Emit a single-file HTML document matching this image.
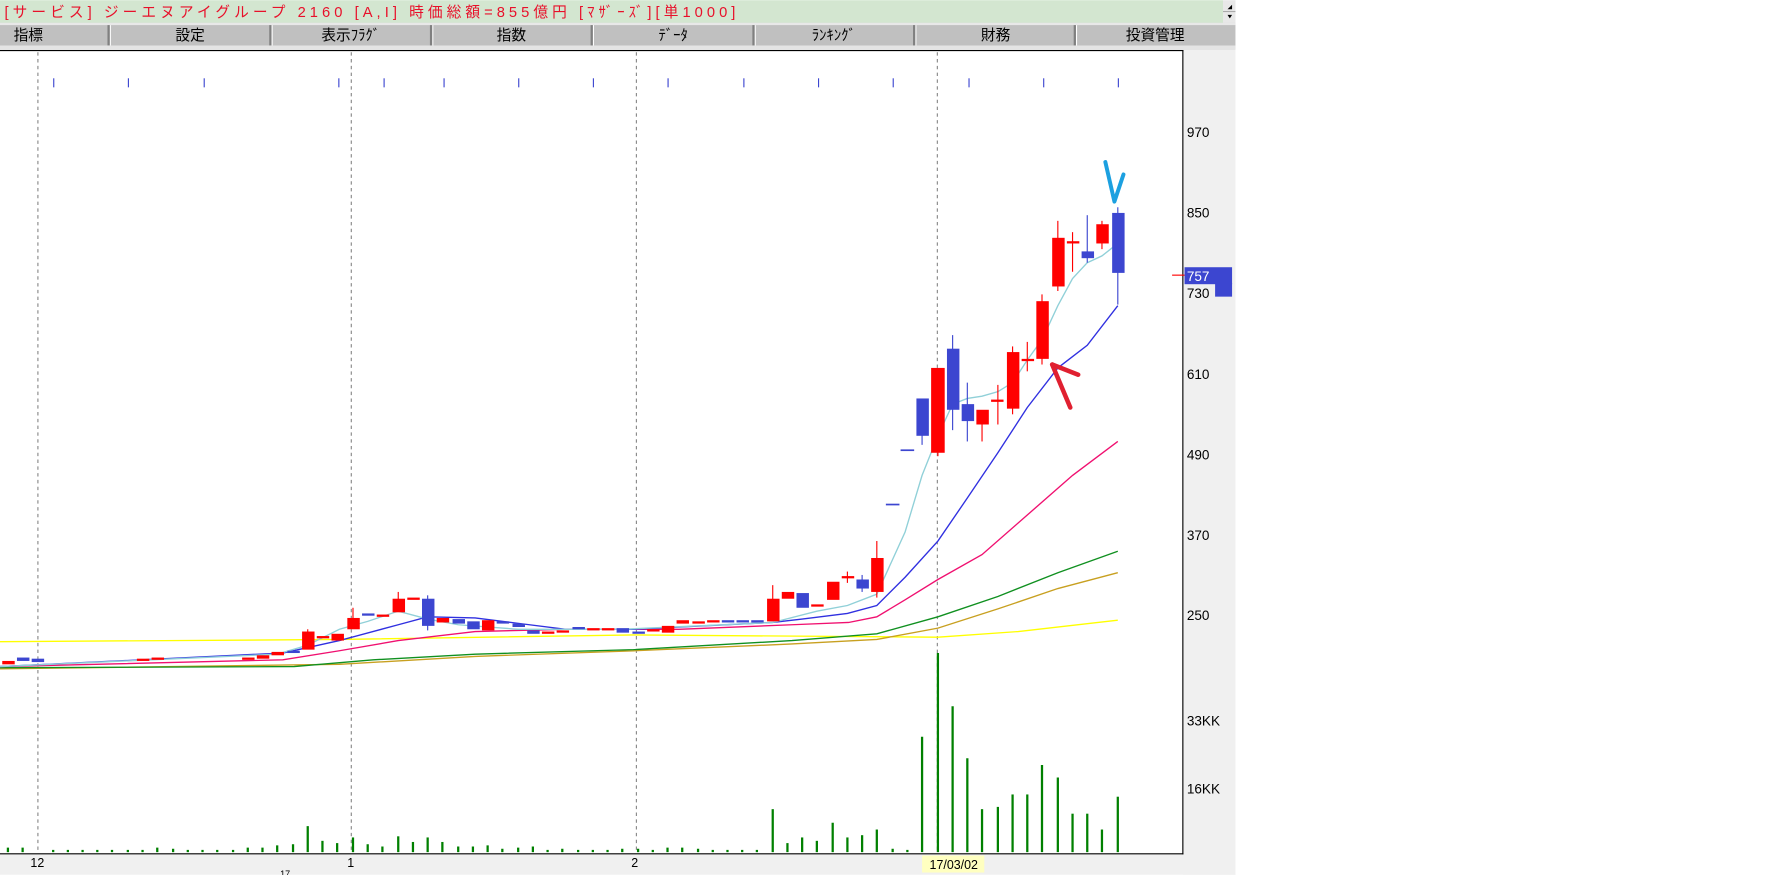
<!DOCTYPE html>
<html><head><meta charset="utf-8"><style>
html,body{margin:0;padding:0;background:#fff;width:1774px;height:875px;overflow:hidden}
svg{display:block}
text{font-family:"Liberation Sans","Noto Sans CJK JP",sans-serif}
</style></head><body>
<svg width="1774" height="875" viewBox="0 0 1568 773" xmlns="http://www.w3.org/2000/svg">
<rect x="0" y="0" width="1568" height="773" fill="#fff"/>
<!-- title bar -->
<rect x="0" y="0" width="1081" height="20" fill="#d3e6d0"/>
<rect x="1081" y="0" width="11" height="20" fill="#e8e8e8"/>
<line x1="1081" y1="10" x2="1092" y2="10" stroke="#aaa"/>
<path d="M1085,8 L1089,8 L1089,4 Z M1085,13 L1089,13 L1087,16 Z" fill="#000"/>
<text x="4" y="15" font-size="13" fill="#e8102a" textLength="646" lengthAdjust="spacing">[サービス]  ジーエヌアイグループ  2160  [A,I]  時価総額=855億円  [ﾏｻﾞｰｽﾞ][単1000]</text>
<!-- menu -->
<rect x="0" y="20" width="1092" height="23" fill="#c0c0c0"/>
<rect x="0" y="20" width="1092" height="2" fill="#e8e8e8"/>
<g fill="#fff"><rect x="97" y="22" width="1" height="18"/><rect x="240" y="22" width="1" height="18"/><rect x="382" y="22" width="1" height="18"/><rect x="524" y="22" width="1" height="18"/><rect x="667" y="22" width="1" height="18"/><rect x="809" y="22" width="1" height="18"/><rect x="951" y="22" width="1" height="18"/></g>
<g fill="#808080"><rect x="95" y="22" width="2" height="18"/><rect x="238" y="22" width="2" height="18"/><rect x="380" y="22" width="2" height="18"/><rect x="522" y="22" width="2" height="18"/><rect x="665" y="22" width="2" height="18"/><rect x="807" y="22" width="2" height="18"/><rect x="949" y="22" width="2" height="18"/></g>
<rect x="0" y="40" width="1092" height="4" fill="#e4e4e4"/>
<g font-size="13" fill="#000" text-anchor="middle">
<text x="25" y="35">指標</text><text x="168" y="35">設定</text><text x="310" y="35">表示ﾌﾗｸﾞ</text><text x="452" y="35">指数</text><text x="595" y="35">ﾃﾞｰﾀ</text><text x="737" y="35">ﾗﾝｷﾝｸﾞ</text><text x="880" y="35">財務</text><text x="1021" y="35">投資管理</text>
</g>
<!-- right panel / bottom strip -->
<rect x="1046" y="44" width="46" height="729" fill="#f0f0f0"/>
<rect x="0" y="755" width="1092" height="18" fill="#f0f0f0"/>
<line x1="0" y1="44.5" x2="1046" y2="44.5" stroke="#000"/>
<line x1="1045.5" y1="44" x2="1045.5" y2="755" stroke="#000"/>
<line x1="0" y1="754.5" x2="1046" y2="754.5" stroke="#000"/>
<!-- grid dashed -->
<g stroke="#888" stroke-dasharray="3,3" stroke-width="1">
<line x1="33.5" y1="46" x2="33.5" y2="754"/><line x1="310.5" y1="46" x2="310.5" y2="754"/><line x1="562.5" y1="46" x2="562.5" y2="754"/><line x1="828.5" y1="46" x2="828.5" y2="754"/>
</g>
<!-- top ticks -->
<g stroke="#3c46d0">
<line x1="47.5" y1="69" x2="47.5" y2="77"/><line x1="113.5" y1="69" x2="113.5" y2="77"/><line x1="180.5" y1="69" x2="180.5" y2="77"/><line x1="299.5" y1="69" x2="299.5" y2="77"/><line x1="339.5" y1="69" x2="339.5" y2="77"/><line x1="392.5" y1="69" x2="392.5" y2="77"/><line x1="458.5" y1="69" x2="458.5" y2="77"/><line x1="524.5" y1="69" x2="524.5" y2="77"/><line x1="590.5" y1="69" x2="590.5" y2="77"/><line x1="657.5" y1="69" x2="657.5" y2="77"/><line x1="723.5" y1="69" x2="723.5" y2="77"/><line x1="789.5" y1="69" x2="789.5" y2="77"/><line x1="856.5" y1="69" x2="856.5" y2="77"/><line x1="922.5" y1="69" x2="922.5" y2="77"/><line x1="988.5" y1="69" x2="988.5" y2="77"/>
</g>
<!-- moving averages -->
<g fill="none" stroke-width="1.2">
<polyline stroke="#ffff00" points="0,567 300,565 560,561 829,563 900,558 988,548"/>
<polyline stroke="#c8a020" points="0,591 300,587 420,580 560,575 700,569 775,565 829,555 882,538 935,520 988,506"/>
<polyline stroke="#109020" points="0,590 260,589 330,583 420,578 560,574 700,566 775,560 829,545 882,527 935,506 988,487"/>
<polyline stroke="#f01070" points="0,589 250,583 300,575 352,566 420,558 500,556 600,556 700,552 750,550 775,545 800,530 829,512 868,490 908,455 948,420 988,390"/>
<polyline stroke="#3030e0" points="0,589 250,577 300,566 352,552 378,545 420,546 460,551 500,556 560,556 683,550 709,547 749,542 775,535 800,510 829,478 855,440 882,400 908,360 935,325 961,305 988,270"/>
<polyline stroke="#90d0d8" points="0,589 245,578 272,570 300,556 325,549 352,540 378,547 405,552 458,556 550,556 683,550 722,540 749,535 775,525 800,470 815,420 829,385 842,357 855,352 868,350 882,346 895,338 908,318 921,300 935,270 948,246 961,232 974,226 988,215"/>
</g>
<!-- candles: red -->
<g fill="#ff0000" stroke="none">
<rect x="2" y="584" width="11" height="3"/><rect x="121" y="582" width="11" height="2"/><rect x="134" y="581" width="11" height="2"/><rect x="214" y="581" width="11" height="2"/><rect x="227" y="579" width="11" height="3"/><rect x="240" y="576" width="11" height="3"/>
<rect x="267" y="558" width="11" height="16"/><rect x="271.5" y="556" width="1" height="3"/>
<rect x="280" y="562" width="11" height="2"/><rect x="293" y="560" width="11" height="6"/>
<rect x="307" y="546" width="11" height="10"/><rect x="311.5" y="537" width="1" height="10"/>
<rect x="333" y="543" width="11" height="2"/>
<rect x="347" y="529" width="11" height="12"/><rect x="351.5" y="523" width="1" height="7"/>
<rect x="360" y="528" width="11" height="2"/>
<rect x="386" y="546" width="11" height="4"/><rect x="426" y="548" width="11" height="9"/><rect x="479" y="558" width="11" height="2"/><rect x="492" y="557" width="11" height="2"/><rect x="519" y="555" width="11" height="2"/><rect x="532" y="555" width="11" height="2"/><rect x="572" y="556" width="11" height="2"/><rect x="585" y="553" width="11" height="6"/><rect x="598" y="548" width="11" height="3"/><rect x="612" y="549" width="11" height="2"/><rect x="625" y="548" width="11" height="2"/>
<rect x="678" y="529" width="11" height="20"/><rect x="682.5" y="517" width="1" height="13"/>
<rect x="691" y="523" width="11" height="6"/><rect x="717" y="534" width="11" height="2"/>
<rect x="731" y="514" width="11" height="16"/><rect x="744" y="509" width="11" height="2"/><rect x="748.5" y="505" width="1" height="10"/>
<rect x="770" y="493" width="11" height="30"/><rect x="774.5" y="478" width="1" height="50"/>
<rect x="823" y="325" width="12" height="75"/><rect x="828.5" y="395" width="1" height="8"/>
<rect x="863" y="362" width="11" height="13"/><rect x="867.5" y="374" width="1" height="16"/>
<rect x="876" y="353" width="11" height="2"/><rect x="881.5" y="340" width="1" height="35"/>
<rect x="890" y="311" width="11" height="50"/><rect x="894.5" y="306" width="1" height="60"/>
<rect x="903" y="317" width="11" height="2"/><rect x="907.5" y="302" width="1" height="26"/>
<rect x="916" y="266" width="11" height="51"/><rect x="920.5" y="260" width="1" height="62"/>
<rect x="930" y="210" width="11" height="43"/><rect x="934.5" y="195" width="1" height="62"/>
<rect x="943" y="213" width="11" height="2"/><rect x="947.5" y="205" width="1" height="35"/>
<rect x="969" y="198" width="11" height="17"/><rect x="973.5" y="195" width="1" height="25"/>
</g>
<!-- candles: blue -->
<g fill="#3c46d0">
<rect x="15" y="581" width="11" height="3"/><rect x="28" y="582" width="11" height="3"/>
<rect x="254" y="575" width="11" height="2"/><rect x="320" y="542" width="11" height="2"/>
<rect x="373" y="529" width="11" height="24"/><rect x="377.5" y="526" width="1" height="31"/>
<rect x="400" y="547" width="11" height="4"/><rect x="413" y="549" width="11" height="7"/><rect x="439" y="549" width="11" height="2"/><rect x="453" y="551" width="11" height="3"/><rect x="466" y="557" width="11" height="3"/><rect x="506" y="554" width="11" height="2"/><rect x="545" y="555" width="11" height="4"/><rect x="559" y="558" width="11" height="2"/><rect x="638" y="548" width="11" height="2"/><rect x="651" y="548" width="11" height="2"/><rect x="664" y="548" width="11" height="2"/>
<rect x="704" y="524" width="11" height="13"/>
<rect x="757" y="512" width="11" height="8"/><rect x="761.5" y="508" width="1" height="15"/>
<rect x="783" y="445" width="12" height="1.5"/><rect x="796" y="397" width="12" height="1.5"/>
<rect x="810" y="352" width="11" height="33"/><rect x="814.5" y="384" width="1" height="9"/>
<rect x="837" y="308" width="11" height="54"/><rect x="841.5" y="296" width="1" height="84"/>
<rect x="850" y="357" width="11" height="15"/><rect x="854.5" y="338" width="1" height="52"/>
<rect x="956" y="222" width="11" height="6"/><rect x="960.5" y="190" width="1" height="42"/>
<rect x="983" y="188" width="11" height="53"/><rect x="987.5" y="183" width="1" height="86"/>
</g>
<!-- volume -->
<g stroke="#008000" stroke-width="2">
<line x1="7" y1="753" x2="7" y2="749"/><line x1="20" y1="753" x2="20" y2="749"/><line x1="47" y1="753" x2="47" y2="751"/><line x1="60" y1="753" x2="60" y2="751"/><line x1="73" y1="753" x2="73" y2="751"/><line x1="86" y1="753" x2="86" y2="751"/><line x1="99" y1="753" x2="99" y2="751"/><line x1="113" y1="753" x2="113" y2="751"/><line x1="126" y1="753" x2="126" y2="751"/><line x1="139" y1="753" x2="139" y2="749"/><line x1="153" y1="753" x2="153" y2="750"/><line x1="166" y1="753" x2="166" y2="751"/><line x1="179" y1="753" x2="179" y2="751"/><line x1="192" y1="753" x2="192" y2="751"/><line x1="206" y1="753" x2="206" y2="751"/><line x1="219" y1="753" x2="219" y2="749"/><line x1="232" y1="753" x2="232" y2="749"/><line x1="245" y1="753" x2="245" y2="747"/><line x1="259" y1="753" x2="259" y2="746"/><line x1="272" y1="753" x2="272" y2="730"/><line x1="285" y1="753" x2="285" y2="743"/><line x1="298" y1="753" x2="298" y2="745"/><line x1="312" y1="753" x2="312" y2="740"/><line x1="325" y1="753" x2="325" y2="746"/><line x1="338" y1="753" x2="338" y2="748"/><line x1="352" y1="753" x2="352" y2="739"/><line x1="365" y1="753" x2="365" y2="744"/><line x1="378" y1="753" x2="378" y2="740"/><line x1="391" y1="753" x2="391" y2="744"/><line x1="405" y1="753" x2="405" y2="748"/><line x1="418" y1="753" x2="418" y2="748"/><line x1="431" y1="753" x2="431" y2="747"/><line x1="444" y1="753" x2="444" y2="750"/><line x1="458" y1="753" x2="458" y2="749"/><line x1="471" y1="753" x2="471" y2="748"/><line x1="484" y1="753" x2="484" y2="751"/><line x1="497" y1="753" x2="497" y2="750"/><line x1="511" y1="753" x2="511" y2="751"/><line x1="524" y1="753" x2="524" y2="751"/><line x1="537" y1="753" x2="537" y2="751"/><line x1="550" y1="753" x2="550" y2="750"/><line x1="564" y1="753" x2="564" y2="750"/><line x1="577" y1="753" x2="577" y2="751"/><line x1="590" y1="753" x2="590" y2="749"/><line x1="603" y1="753" x2="603" y2="749"/><line x1="617" y1="753" x2="617" y2="750"/><line x1="630" y1="753" x2="630" y2="751"/><line x1="643" y1="753" x2="643" y2="751"/><line x1="656" y1="753" x2="656" y2="751"/><line x1="669" y1="753" x2="669" y2="751"/><line x1="683" y1="753" x2="683" y2="715"/><line x1="696" y1="753" x2="696" y2="745"/><line x1="709" y1="753" x2="709" y2="740"/><line x1="722" y1="753" x2="722" y2="743"/><line x1="736" y1="753" x2="736" y2="727"/><line x1="749" y1="753" x2="749" y2="740"/><line x1="762" y1="753" x2="762" y2="738"/><line x1="775" y1="753" x2="775" y2="733"/><line x1="789" y1="753" x2="789" y2="750"/><line x1="802" y1="753" x2="802" y2="751"/><line x1="815" y1="753" x2="815" y2="651"/><line x1="829" y1="753" x2="829" y2="577"/><line x1="842" y1="753" x2="842" y2="624"/><line x1="855" y1="753" x2="855" y2="670"/><line x1="868" y1="753" x2="868" y2="715"/><line x1="882" y1="753" x2="882" y2="713"/><line x1="895" y1="753" x2="895" y2="702"/><line x1="908" y1="753" x2="908" y2="702"/><line x1="921" y1="753" x2="921" y2="676"/><line x1="935" y1="753" x2="935" y2="687"/><line x1="948" y1="753" x2="948" y2="719"/><line x1="961" y1="753" x2="961" y2="719"/><line x1="974" y1="753" x2="974" y2="733"/><line x1="988" y1="753" x2="988" y2="704"/>
</g>
<!-- price marker -->
<line x1="1036" y1="243" x2="1047" y2="243" stroke="#ff0000"/>
<rect x="1047" y="236" width="42" height="15" fill="#3c46d0"/>
<rect x="1074" y="250" width="15" height="12" fill="#3c46d0"/>
<!-- axis labels -->
<g font-size="12" fill="#000">
<text x="1049" y="121">970</text><text x="1049" y="192">850</text><text x="1049" y="248" fill="#fff">757</text><text x="1049" y="263">730</text><text x="1049" y="335">610</text><text x="1049" y="406">490</text><text x="1049" y="477">370</text><text x="1049" y="548">250</text><text x="1049" y="641">33KK</text><text x="1049" y="701">16KK</text>
</g>
<rect x="815" y="756" width="55" height="15" fill="#ffffc0"/>
<g font-size="11" fill="#000" text-anchor="middle">
<text x="33" y="766">12</text><text x="310" y="766">1</text><text x="561" y="766">2</text><text x="843" y="768">17/03/02</text>
<text x="252" y="775" font-size="8">17</text>
</g>
<!-- annotations -->
<polyline points="977,143 985,178 993,154" fill="none" stroke="#1ca0e0" stroke-width="3.5" stroke-linecap="round" stroke-linejoin="round"/>
<g stroke="#e02030" stroke-width="4" stroke-linecap="round" fill="none">
<line x1="930" y1="322" x2="946" y2="360"/><line x1="930" y1="322" x2="953" y2="331"/>
</g>
</svg>
</body></html>
